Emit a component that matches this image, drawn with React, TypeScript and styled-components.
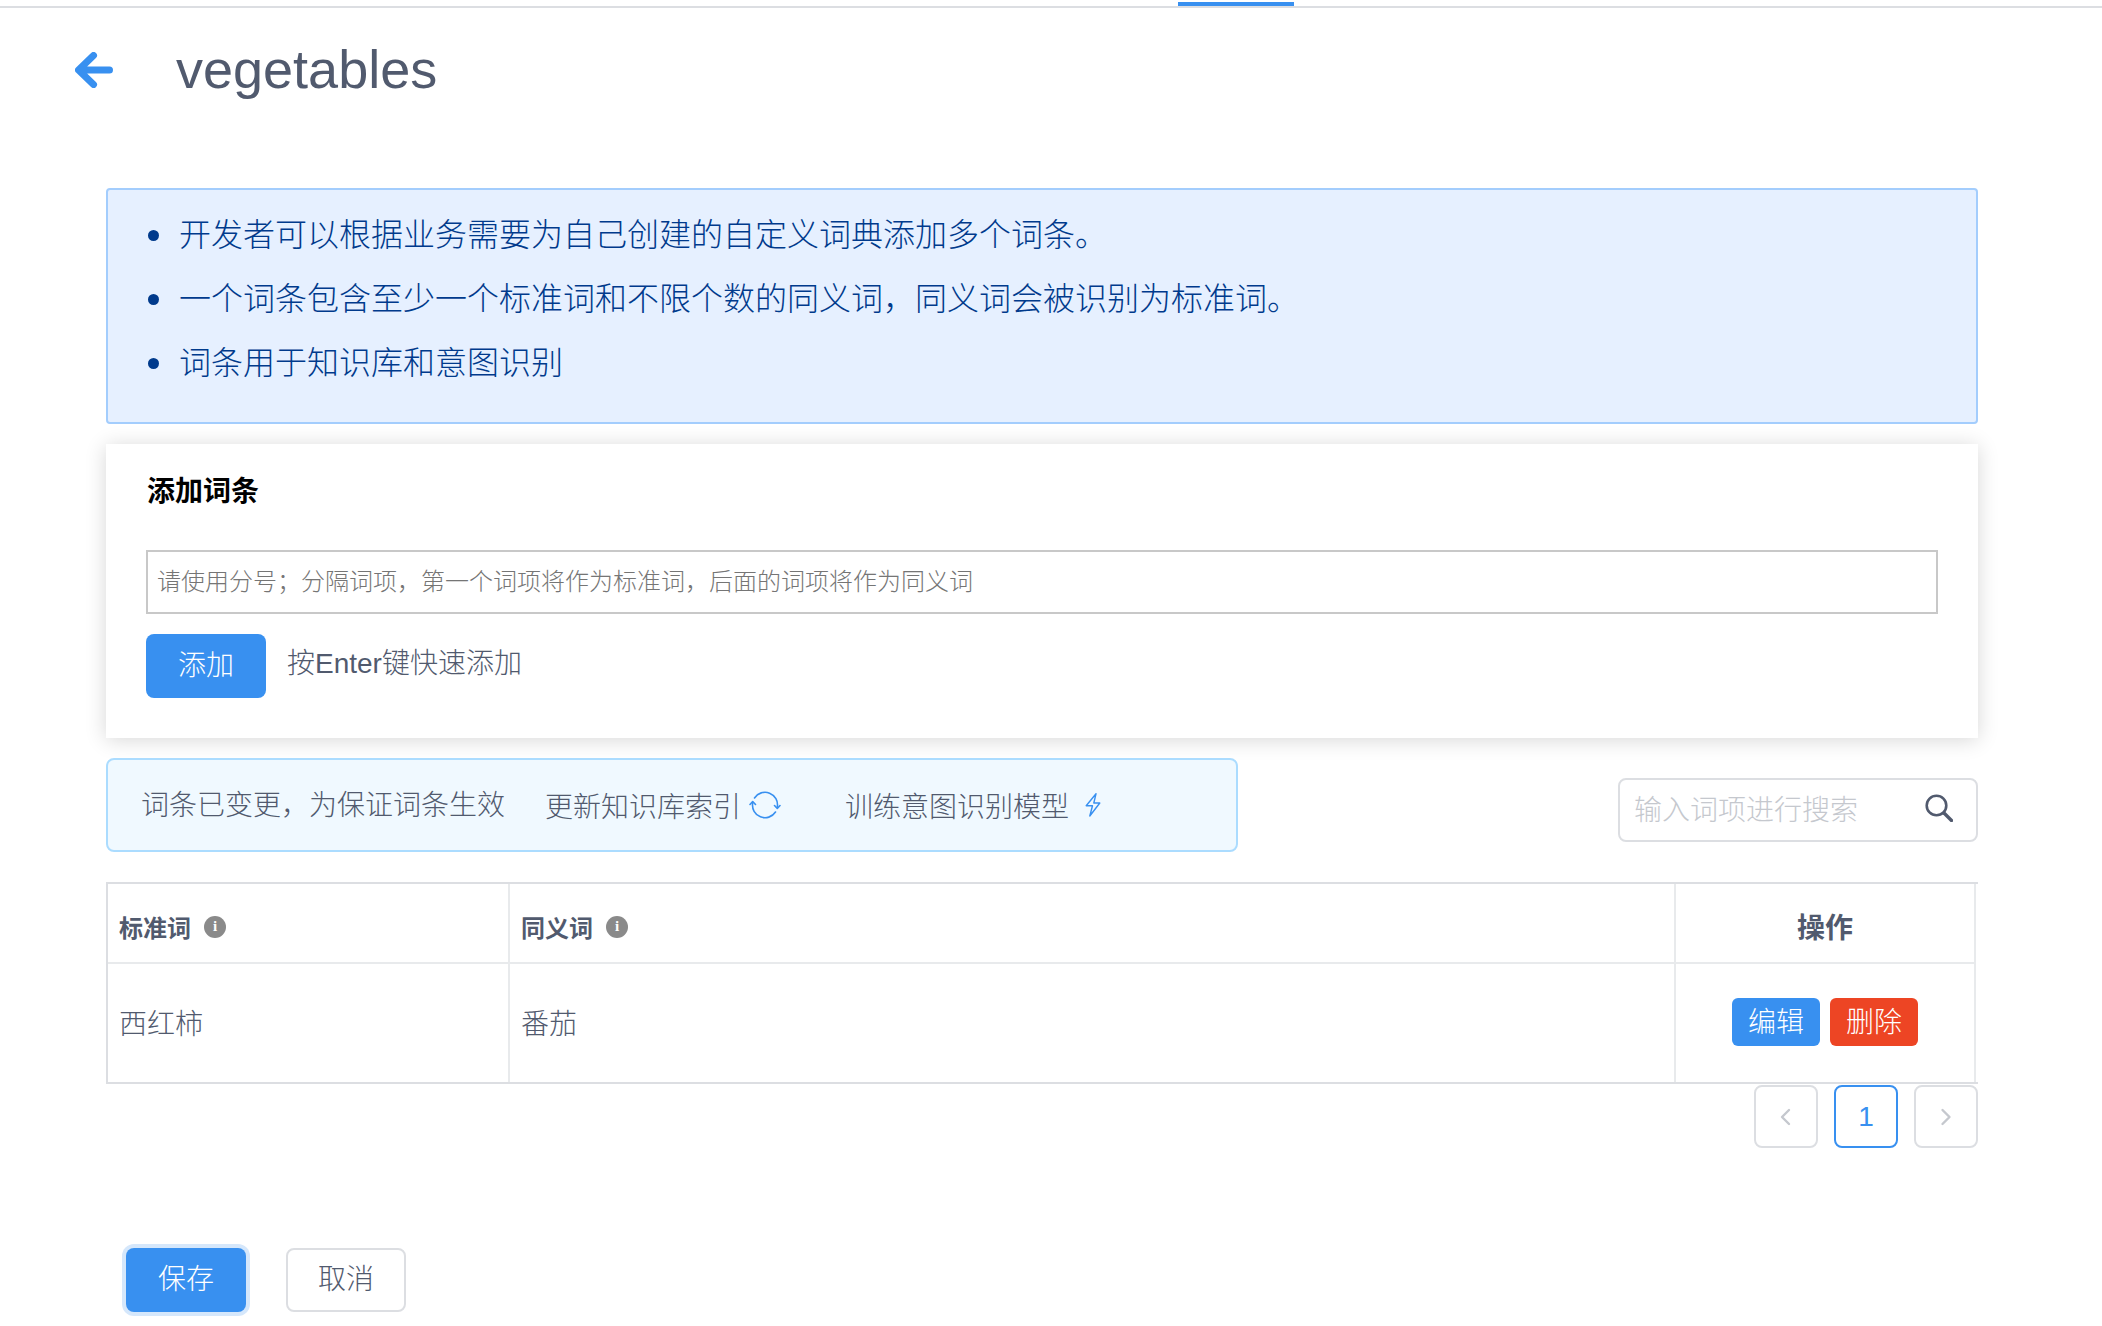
import React from "react";
import styled, { createGlobalStyle } from "styled-components";

const FONT = `"Liberation Sans", "Noto Sans CJK SC", sans-serif`;
const TEXT = "#515a6e";
const BLUE = "#3890f0";
const LINE = "#dcdee2";

const Global = createGlobalStyle`
  html, body { margin: 0; padding: 0; background: #fff; }
  body { font-family: ${FONT}; color: ${TEXT}; }
  * { box-sizing: border-box; }
`;

const Page = styled.div`
  width: 2102px;
  height: 1326px;
  overflow: hidden;
  background: #fff;
`;

const TopBar = styled.div`
  height: 8px;
  padding: 2px 0 0 1178px;
  border-bottom: 2px solid ${LINE};
`;

const TabIndicator = styled.div`
  width: 116px;
  height: 4px;
  background: ${BLUE};
`;

const Header = styled.header`
  height: 124px;
  display: flex;
  align-items: center;
  padding-left: 75px;
`;

const BackIcon = styled.svg`
  width: 38px;
  height: 36px;
  flex: none;
`;

const Title = styled.h1`
  margin: -2px 0 0 63px;
  font-size: 54px;
  font-weight: 400;
  line-height: 64px;
  color: ${TEXT};
`;

const Content = styled.main`
  margin-top: 56px;
  padding: 0 124px 0 106px;
`;

const InfoBox = styled.ul`
  height: 236px;
  margin: 0;
  padding: 10px 0 0 40px;
  list-style: none;
  background: #e6f0ff;
  border: 2px solid #a3cdfd;
  border-radius: 4px;
`;

const InfoItem = styled.li`
  display: flex;
  align-items: center;
  height: 64px;
  font-size: 32px;
  font-weight: 300;
  color: #003a8c;

  &::before {
    content: "";
    width: 11px;
    height: 11px;
    margin: 6px 20px 0 0;
    border-radius: 50%;
    background: #003a8c;
    flex: none;
  }
`;

const AddCard = styled.section`
  height: 294px;
  margin-top: 20px;
  padding: 28px 40px 40px;
  background: #fff;
  box-shadow: 0 2px 20px rgba(0, 0, 0, 0.16);
`;

const CardTitle = styled.h2`
  margin: 0 0 0 1px;
  font-size: 28px;
  line-height: 40px;
  font-weight: 700;
  color: #000;
`;

const TermInput = styled.input`
  display: block;
  width: 100%;
  height: 64px;
  margin-top: 38px;
  padding: 0 9px;
  font: 300 24px ${FONT};
  border: 2px solid #c8c8c8;
  outline: none;
  border-radius: 0;

  &::placeholder {
    color: #757575;
    opacity: 1;
  }
`;

const AddRow = styled.div`
  display: flex;
  align-items: center;
  margin-top: 20px;
  gap: 21px;
`;

const Button = styled.button<{ $primary?: boolean; $focused?: boolean }>`
  width: 120px;
  height: 64px;
  padding: 0 0 6px;
  font: 300 28px ${FONT};
  border-radius: 8px;
  border: ${(p) => (p.$primary ? "0" : `2px solid ${LINE}`)};
  background: ${(p) => (p.$primary ? BLUE : "#fff")};
  color: ${(p) => (p.$primary ? "#fff" : TEXT)};
  box-shadow: ${(p) => (p.$focused ? "0 0 0 4px #d5e7fb" : "none")};
`;

const Hint = styled.span`
  font-size: 28px;
  font-weight: 300;
  line-height: 64px;
  margin-top: -4px;
`;

const ActionRow = styled.div`
  display: flex;
  justify-content: space-between;
  align-items: flex-start;
  margin-top: 20px;
`;

const Notice = styled.div`
  width: 1132px;
  height: 94px;
  display: flex;
  align-items: center;
  padding-left: 33px;
  font-size: 28px;
  font-weight: 300;
  background: #f0f9ff;
  border: 2px solid #abdcff;
  border-radius: 8px;
`;

const NoticeText = styled.span`
  margin-top: -4px;
`;

const NoticeAction = styled.span<{ $gap: number }>`
  display: flex;
  align-items: center;
  margin-left: ${(p) => p.$gap}px;
`;

const SyncIcon = styled.svg`
  width: 32px;
  height: 28px;
  margin-left: 8px;
  flex: none;
`;

const BoltIcon = styled.svg`
  width: 16px;
  height: 24px;
  margin-left: 16px;
  flex: none;
`;

const SearchBox = styled.div`
  width: 360px;
  height: 64px;
  margin-top: 20px;
  display: flex;
  align-items: center;
  padding: 0 23px 0 14px;
  border: 2px solid ${LINE};
  border-radius: 8px;
`;

const SearchInput = styled.input`
  flex: 1;
  min-width: 0;
  height: 100%;
  padding: 2px 0 0;
  border: 0;
  outline: none;
  background: transparent;
  font: 300 28px ${FONT};

  &::placeholder {
    color: #c5c8ce;
    opacity: 1;
  }
`;

const SearchIcon = styled.svg`
  width: 28px;
  height: 28px;
  flex: none;
  margin-top: -4px;
`;

const TableWrap = styled.div`
  width: 1872px;
  margin-top: 30px;
  border: 2px solid ${LINE};
  border-right: 0;
`;

const Table = styled.table`
  width: 1868px;
  table-layout: fixed;
  border-collapse: separate;
  border-spacing: 0;
`;

const HeadCell = styled.th<{ $center?: boolean }>`
  height: 80px;
  padding: 6px 11px 0;
  text-align: ${(p) => (p.$center ? "center" : "left")};
  font-size: ${(p) => (p.$center ? "28px" : "24px")};
  font-weight: 700;
  color: ${TEXT};
  border-right: 2px solid #e8eaec;
  border-bottom: 2px solid #e8eaec;
`;

const HeadLabel = styled.span`
  display: inline-flex;
  align-items: center;
  gap: 13px;
`;

const InfoDot = styled.i`
  width: 22px;
  height: 22px;
  margin-top: 1px;
  display: inline-flex;
  align-items: center;
  justify-content: center;
  border-radius: 50%;
  background: #8a8a8a;
  color: #fff;
  font: 700 15px "Liberation Serif", serif;
`;

const BodyCell = styled.td<{ $center?: boolean }>`
  height: 118px;
  padding: 0 11px 2px;
  font-size: 28px;
  font-weight: 300;
  text-align: ${(p) => (p.$center ? "center" : "left")};
  color: ${TEXT};
  border-right: 2px solid #e8eaec;
`;

const SmallButton = styled.button<{ $danger?: boolean }>`
  width: 88px;
  height: 48px;
  padding: 0 0 5px;
  margin: 0 5px;
  border: 0;
  border-radius: 6px;
  color: #fff;
  font: 300 28px ${FONT};
  background: ${(p) => (p.$danger ? "#ed4524" : BLUE)};
`;

const Pager = styled.nav`
  display: flex;
  justify-content: flex-end;
  gap: 16px;
  margin-top: 1px;
`;

const PageItem = styled.div<{ $active?: boolean }>`
  width: 64px;
  height: 63px;
  display: flex;
  align-items: center;
  justify-content: center;
  border: 2px solid ${(p) => (p.$active ? BLUE : LINE)};
  border-radius: 8px;
  color: ${BLUE};
  font-size: 28px;
`;

const Chevron = styled.svg`
  width: 20px;
  height: 20px;
`;

const Footer = styled.footer`
  display: flex;
  gap: 40px;
  margin-top: 100px;
  padding-left: 20px;
`;

export default function App() {
  return (
    <Page>
      <Global />
      <TopBar>
        <TabIndicator />
      </TopBar>
      <Header>
        <BackIcon viewBox="0 0 38 36" fill="none" stroke={BLUE} strokeWidth="7" strokeLinecap="round" strokeLinejoin="round">
          <path d="M18.500 3.500 3.500 18l15 14.500M5 18h29.500" />
        </BackIcon>
        <Title>vegetables</Title>
      </Header>
      <Content>
        <InfoBox>
          <InfoItem>开发者可以根据业务需要为自己创建的自定义词典添加多个词条。</InfoItem>
          <InfoItem>一个词条包含至少一个标准词和不限个数的同义词，同义词会被识别为标准词。</InfoItem>
          <InfoItem>词条用于知识库和意图识别</InfoItem>
        </InfoBox>
        <AddCard>
          <CardTitle>添加词条</CardTitle>
          <TermInput placeholder="请使用分号；分隔词项，第一个词项将作为标准词，后面的词项将作为同义词" />
          <AddRow>
            <Button $primary>添加</Button>
            <Hint>按Enter键快速添加</Hint>
          </AddRow>
        </AddCard>
        <ActionRow>
          <Notice>
            <NoticeText>词条已变更，为保证词条生效</NoticeText>
            <NoticeAction $gap={40}>
              更新知识库索引
              <SyncIcon viewBox="0 0 32 28" fill="none" stroke={BLUE} strokeWidth="1.600" strokeLinecap="round" strokeLinejoin="round">
                <path d="M3.700 12A12.500 12.500 0 0 0 26.500 21M28.300 16A12.500 12.500 0 0 0 5.500 7" />
                <path d="M1 13.500l2.700-3 2.800 3M25.500 14.500l2.800 3 2.700-3" />
              </SyncIcon>
            </NoticeAction>
            <NoticeAction $gap={64}>
              训练意图识别模型
              <BoltIcon viewBox="0 0 16 24" fill="none" stroke={BLUE} strokeWidth="1.400" strokeLinejoin="round">
                <path d="M11 .8 1.200 12.700h6.300L4.800 23 14.800 10H8.800z" />
              </BoltIcon>
            </NoticeAction>
          </Notice>
          <SearchBox>
            <SearchInput placeholder="输入词项进行搜索" />
            <SearchIcon viewBox="0 0 28 28" fill="none" stroke={TEXT} strokeWidth="2.600" strokeLinecap="round">
              <circle cx="11.500" cy="11.500" r="9.800" />
              <path d="M19 19l7.500 7.500" strokeWidth="3.400" />
            </SearchIcon>
          </SearchBox>
        </ActionRow>
        <TableWrap>
          <Table>
            <colgroup>
              <col style={{ width: 402 }} />
              <col style={{ width: 1166 }} />
              <col style={{ width: 300 }} />
            </colgroup>
            <thead>
              <tr>
                <HeadCell>
                  <HeadLabel>
                    标准词
                    <InfoDot>i</InfoDot>
                  </HeadLabel>
                </HeadCell>
                <HeadCell>
                  <HeadLabel>
                    同义词
                    <InfoDot>i</InfoDot>
                  </HeadLabel>
                </HeadCell>
                <HeadCell $center>操作</HeadCell>
              </tr>
            </thead>
            <tbody>
              <tr>
                <BodyCell>西红柿</BodyCell>
                <BodyCell>番茄</BodyCell>
                <BodyCell $center>
                  <SmallButton>编辑</SmallButton>
                  <SmallButton $danger>删除</SmallButton>
                </BodyCell>
              </tr>
            </tbody>
          </Table>
        </TableWrap>
        <Pager>
          <PageItem>
            <Chevron viewBox="0 0 20 20" fill="none" stroke="#c5c8ce" strokeWidth="2.400" strokeLinecap="round" strokeLinejoin="round">
              <path d="M13 3 6 10l7 7" />
            </Chevron>
          </PageItem>
          <PageItem $active>1</PageItem>
          <PageItem>
            <Chevron viewBox="0 0 20 20" fill="none" stroke="#c5c8ce" strokeWidth="2.400" strokeLinecap="round" strokeLinejoin="round">
              <path d="M6.500 3l7 7-7 7" />
            </Chevron>
          </PageItem>
        </Pager>
        <Footer>
          <Button $primary $focused>保存</Button>
          <Button>取消</Button>
        </Footer>
      </Content>
    </Page>
  );
}
